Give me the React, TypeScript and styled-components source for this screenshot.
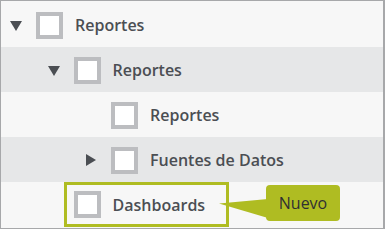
import React from "react";
import styled, { createGlobalStyle } from "styled-components";

const GlobalStyle = createGlobalStyle`
  html, body { margin: 0; padding: 0; background: #ffffff; }
  body { font-family: "Open Sans", "Liberation Sans", sans-serif; }
`;

const Frame = styled.div`
  position: relative;
  width: 385px;
  height: 229px;
  box-sizing: border-box;
  border: 1px solid #a7a8aa;
  border-right-width: 2px;
  padding: 1px 0;
  background: #f7f7f7;
  display: flex;
  flex-direction: column;
  overflow: hidden;
`;

const Row = styled.div<{ $shade: boolean; $level: number }>`
  height: 45px;
  flex: none;
  display: flex;
  align-items: center;
  box-sizing: border-box;
  padding-left: ${(p) => 9 + p.$level * 37.5}px;
  padding-top: 1px;
  background: ${(p) => (p.$shade ? "#e6e7e8" : "#f7f7f7")};
`;

const Toggle = styled.span`
  width: 12px;
  height: 12px;
  margin-right: 14px;
  display: flex;
  align-items: center;
  justify-content: center;
  flex: none;
`;

const Check = styled.span`
  width: 27px;
  height: 27px;
  box-sizing: border-box;
  border: 4px solid #bcbdc0;
  background: #ffffff;
  flex: none;
`;

const Label = styled.span`
  margin-left: 12px;
  font-size: 16px;
  font-weight: 600;
  color: #4b4e53;
  white-space: nowrap;
`;

const Highlight = styled.div`
  display: flex;
  align-items: center;
  height: 45px;
  width: 165px;
  box-sizing: border-box;
  border: 3px solid #afbc22;
  margin-left: -10px;
  margin-top: -1px;
  padding-left: 7px;
`;

const Callout = styled.div`
  position: absolute;
  left: 265px;
  top: 184px;
  width: 74px;
  height: 36px;
  border-radius: 4px;
  background: #afbc22;
  color: #2f3033;
  font-size: 16px;
  font-weight: 400;
  display: flex;
  align-items: center;
  justify-content: center;
`;

const Pointer = styled.svg`
  position: absolute;
  left: 217px;
  top: 197px;
  overflow: visible;
`;

const Caret = ({ open }: { open: boolean }) => (
  <svg width="12" height="12" viewBox="0 0 12 12">
    {open ? (
      <polygon points="0,2 12,2 6,12" fill="#4b4e53" />
    ) : (
      <polygon points="1,0 11,6 1,12" fill="#4b4e53" />
    )}
  </svg>
);

type Item = {
  label: string;
  level: number;
  caret?: "open" | "closed";
};

const items: Item[] = [
  { label: "Reportes", level: 0, caret: "open" },
  { label: "Reportes", level: 1, caret: "open" },
  { label: "Reportes", level: 2 },
  { label: "Fuentes de Datos", level: 2, caret: "closed" },
];

export default function App() {
  return (
    <>
      <GlobalStyle />
      <Frame>
        {items.map((it, i) => (
          <Row key={i} $shade={i % 2 === 1} $level={it.level}>
            <Toggle>{it.caret && <Caret open={it.caret === "open"} />}</Toggle>
            <Check />
            <Label>{it.label}</Label>
          </Row>
        ))}
        <Row $shade={false} $level={1}>
          <Toggle />
          <Highlight>
            <Check />
            <Label>Dashboards</Label>
          </Highlight>
        </Row>
        <Pointer width="50" height="22">
          <polygon points="1,5.5 50,1 50,20" fill="#afbc22" />
        </Pointer>
        <Callout>Nuevo</Callout>
      </Frame>
    </>
  );
}
